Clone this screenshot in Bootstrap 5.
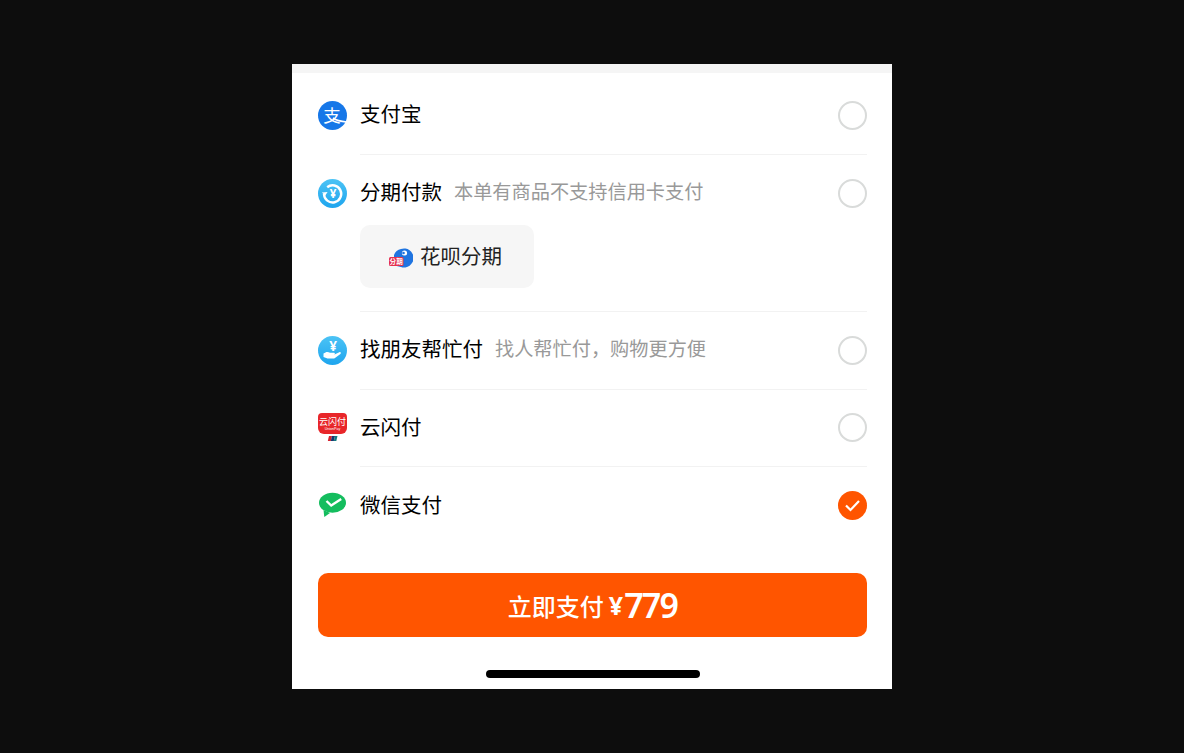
<!DOCTYPE html>
<html lang="zh">
<head>
  <meta charset="UTF-8" />
  <title>支付方式</title>
  <meta name="viewport" content="width=device-width, initial-scale=1.0"/>
  <link href="https://cdn.jsdelivr.net/npm/bootstrap@5.3.3/dist/css/bootstrap.min.css" rel="stylesheet">
  <style>
    html, body { height: 100%; }
    body {
      background: #0d0d0d;
      font-family: "Liberation Sans", "Noto Sans CJK SC", sans-serif;
      padding-top: 64px;
    }
    .pay-panel { width: 600px; height: 625px; background: #fff; }
    .pay-topband { height: 9px; background: #f5f5f5; }
    .pay-list { padding: 4px 25px 0 26px; }
    .pay-head { height: 76.8px; }
    .pay-icon { width: 29px; height: 29px; margin-right: 13px; display: block; flex-shrink: 0; }
    .pay-name { font-size: 20.5px; line-height: 28px; color: #000; }
    .pay-note { font-size: 19.2px; line-height: 28px; color: #999; margin-left: 12px; }
    .pay-radio { width: 29px; height: 29px; border: 2.5px solid #d9dbda; border-radius: 50%; }
    .pay-radio-on { background: #ff5500; border: 0; }
    .pay-line { height: 1px; background: #f2f2f2; margin-left: 42px; }
    .pay-chip {
      width: 174px; height: 63px; margin: -6.5px 0 22.7px 42px; padding: 2px 3px 0 0;
      background: #f6f6f6; border-radius: 10px;
      font-size: 20.5px; color: #222;
    }
    .pay-chip svg { width: 24px; height: 24px; margin-right: 7px; }
    .pay-btn {
      margin: 28.8px 25px 0 26px; height: 64px; width: 549px; padding-top: 8px;
      background: #ff5500; border: 0; border-radius: 10px; color: #fff;
    }
    .pay-btn-label { font-size: 24px; font-weight: 500; line-height: 34px; }
    .pay-btn-cur { font-size: 25px; font-weight: 700; margin-left: 5px; margin-right: 1px; padding-bottom: 6px; font-family: "Noto Sans", sans-serif; }
    .pay-btn-sum { font-size: 34px; font-weight: 600; letter-spacing: -1.8px; padding-bottom: 6px; font-family: "Noto Sans", sans-serif; line-height: 1; }
    .pay-home { width: 214px; height: 8px; background: #000; border-radius: 4px; margin: 33px 0 0 194px; }
  </style>
</head>
<body>

  <div class="pay-panel mx-auto overflow-hidden">
    <div class="pay-topband"></div>

    <div class="pay-list">
      <div class="pay-head d-flex align-items-center">
        <svg class="pay-icon" viewBox="0 0 29 29">
          <circle cx="14.5" cy="14.5" r="14.5" fill="#1677e8"/>
          <text x="14" y="20.500" text-anchor="middle" font-size="17.500" fill="#fff" font-family="Noto Sans CJK SC">支</text>
          <path d="M15 17c3.500 2.500 8 3.500 13.500 4" fill="none" stroke="#fff" stroke-width="1.600"/>
        </svg>
        <span class="pay-name">支付宝</span>
        <div class="pay-radio ms-auto"></div>
      </div>
      <div class="pay-line"></div>

      <div class="pay-head d-flex align-items-center">
        <svg class="pay-icon" viewBox="0 0 29 29">
          <defs><linearGradient id="blueA" x1="0" y1="0" x2="0" y2="1"><stop offset="0" stop-color="#4cc3f5"/><stop offset="1" stop-color="#1ea5ee"/></linearGradient></defs>
          <circle cx="14.5" cy="14.5" r="14.5" fill="url(#blueA)"/>
          <path d="M6 15a8.6 8.6 0 1 0 3.200-6.800" fill="none" stroke="#fff" stroke-width="2.400"/>
          <path d="M3.800 13.500l3.400 3 2.400-3.600z" fill="#fff"/>
          <text x="15" y="18.500" text-anchor="middle" font-size="11.500" font-weight="700" fill="#fff" font-family="Noto Sans">¥</text>
        </svg>
        <span class="pay-name">分期付款</span>
        <span class="pay-note">本单有商品不支持信用卡支付</span>
        <div class="pay-radio ms-auto"></div>
      </div>
      <div class="pay-chip d-flex align-items-center justify-content-center">
        <svg viewBox="0 0 24 24">
          <path d="M12 3a9.500 9.500 0 1 1 0 18a9.500 9.500 0 0 1-7-3V9a9.500 9.500 0 0 1 7-6z" fill="#1f74e0"/>
          <circle cx="15.500" cy="7" r="2.600" fill="#fff"/>
          <circle cx="14.500" cy="7" r="1.300" fill="#1f74e0"/>
          <rect x="0" y="11" width="14.500" height="9" rx="1.500" fill="#e4304f"/>
          <text x="7.200" y="18.300" text-anchor="middle" font-size="6.600" font-weight="700" fill="#fff" font-family="Noto Sans CJK SC">分期</text>
        </svg>
        <span>花呗分期</span>
      </div>
      <div class="pay-line"></div>

      <div class="pay-head d-flex align-items-center">
        <svg class="pay-icon" viewBox="0 0 29 29">
          <circle cx="14.5" cy="14.5" r="14.5" fill="url(#blueA)"/>
          <text x="15" y="14.5" text-anchor="middle" font-size="13.5" font-weight="700" fill="#fff" font-family="Noto Sans">¥</text>
          <path d="M5.500 17.500c2.500-2 4.500-2 6.500-.8h4c1.200 0 1.200 1.800 0 1.800h-3.500l4 .1 4.800-2.400c1.300-.6 2.200.8 1.100 1.700l-5.400 4a3 3 0 0 1-1.900.6H9.500l-4-1.500z" fill="#fff"/>
        </svg>
        <span class="pay-name">找朋友帮忙付</span>
        <span class="pay-note">找人帮忙付，购物更方便</span>
        <div class="pay-radio ms-auto"></div>
      </div>
      <div class="pay-line"></div>

      <div class="pay-head d-flex align-items-center">
        <svg class="pay-icon" viewBox="0 0 29 29">
          <path d="M4 0h21a4 4 0 0 1 4 4v11a6 6 0 0 1-6 6H6a6 6 0 0 1-6-6V4a4 4 0 0 1 4-4z" fill="#e8262a"/>
          <text x="14.500" y="11.500" text-anchor="middle" font-size="9" fill="#fff" font-family="Noto Sans CJK SC">云闪付</text>
          <text x="14.500" y="17" text-anchor="middle" font-size="3.600" fill="#fff" font-family="Liberation Sans">UnionPay</text>
          <path d="M11 23h3l-1.200 5h-3z" fill="#d6232f"/>
          <path d="M14 23h3l-1.200 5h-3z" fill="#17386f"/>
          <path d="M17 23h2.500l-1.200 5h-2.500z" fill="#137a80"/>
        </svg>
        <span class="pay-name">云闪付</span>
        <div class="pay-radio ms-auto"></div>
      </div>
      <div class="pay-line"></div>

      <div class="pay-head d-flex align-items-center">
        <svg class="pay-icon" viewBox="0 0 29 29">
          <ellipse cx="14.500" cy="11.800" rx="13.500" ry="10" fill="#14bd5e"/>
          <path d="M5.500 19l.8 7 5.700-4z" fill="#14bd5e"/>
          <path d="M8.500 10l4.700 4.500 10-6.500" fill="none" stroke="#fff" stroke-width="2.400"/>
        </svg>
        <span class="pay-name">微信支付</span>
        <div class="pay-radio pay-radio-on ms-auto d-flex align-items-center justify-content-center">
          <svg width="17" height="13" viewBox="0 0 17 13"><path d="M2 6.500l4.500 4.500 8.500-9" fill="none" stroke="#fff" stroke-width="2.200"/></svg>
        </div>
      </div>
    </div>

    <button class="pay-btn d-flex align-items-center justify-content-center" type="button">
      <span class="pay-btn-label">立即支付</span>
      <span class="pay-btn-cur">¥</span>
      <span class="pay-btn-sum">779</span>
    </button>
    <div class="pay-home"></div>
  </div>

</body>
</html>
